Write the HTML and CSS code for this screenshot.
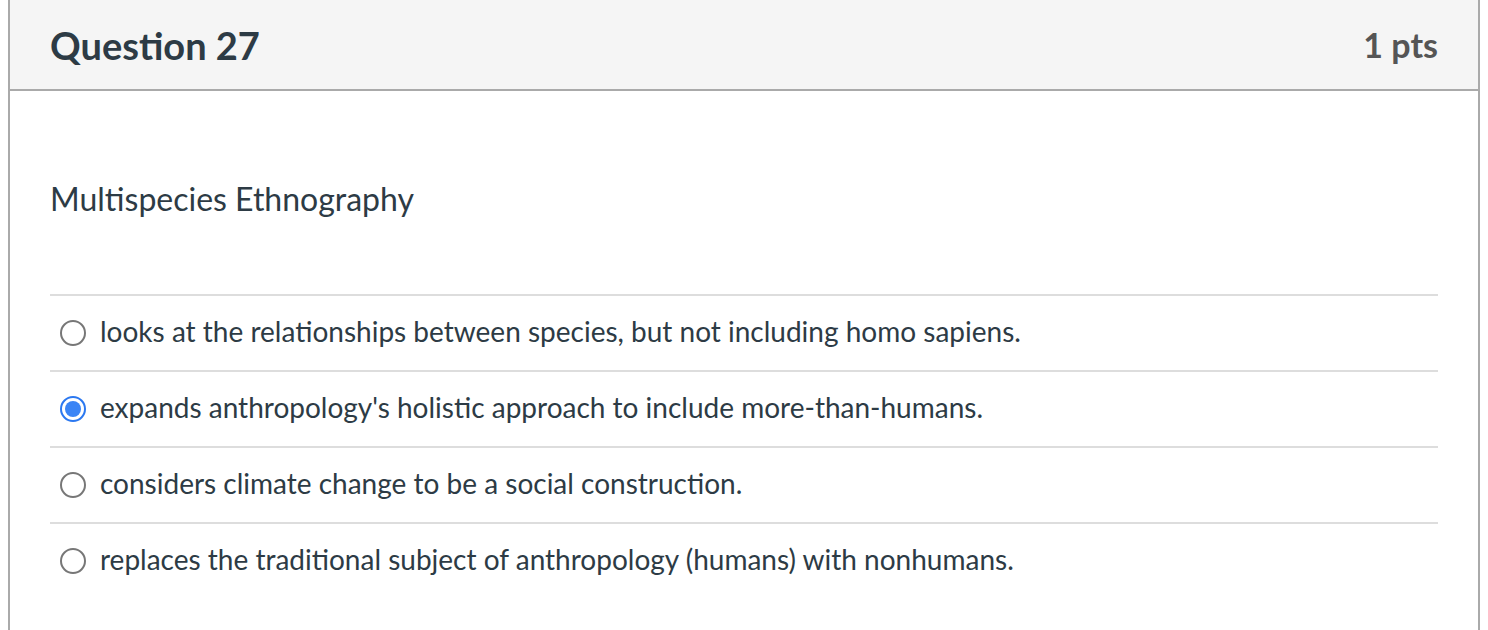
FILE: index.html
```html
<!DOCTYPE html>
<html>
<head>
<meta charset="utf-8">
<link rel="stylesheet" href="styles.css">
</head>
<body>
<div class="question">
  <div class="q-header">
    <h2 class="q-title">Question 27</h2>
    <span class="q-points">1 pts</span>
  </div>
  <div class="q-body">
    <p class="q-text">Multispecies Ethnography</p>
    <div class="answers">
      <label class="answer"><span class="radio"></span><span class="a-text">looks at the relationships between species, but not including homo sapiens.</span></label>
      <label class="answer"><span class="radio checked"></span><span class="a-text">expands anthropology's holistic approach to include more-than-humans.</span></label>
      <label class="answer"><span class="radio"></span><span class="a-text">considers climate change to be a social construction.</span></label>
      <label class="answer"><span class="radio"></span><span class="a-text">replaces the traditional subject of anthropology (humans) with nonhumans.</span></label>
    </div>
  </div>
</div>
</body>
</html>
```
FILE: styles.css
```css
html, body {
  margin: 0;
  padding: 0;
  background: #ffffff;
}
body {
  padding: 0 8px;
  font-family: Lato, "Noto Sans", sans-serif;
  color: #2d3b45;
}
.question {
  border-left: 2px solid #aaaaaa;
  border-right: 2px solid #aaaaaa;
  height: 630px;
  box-sizing: border-box;
}
.q-header {
  height: 89px;
  background: #f5f5f5;
  border-bottom: 2px solid #aaaaaa;
  display: flex;
  align-items: center;
  justify-content: space-between;
  padding: 0 40px;
}
.q-title {
  margin: 0;
  font-size: 38px;
  font-weight: 700;
  color: #2d3b45;
  line-height: 1;
}
.q-points {
  font-size: 34px;
  font-weight: 700;
  color: #555555;
  line-height: 1;
}
.q-body {
  padding: 0 40px;
}
.q-text {
  margin: 0;
  padding-top: 90px;
  height: 36px;
  line-height: 36px;
  font-size: 32px;
  margin-bottom: 77px;
}
.answers {
  display: flex;
  flex-direction: column;
}
.answer {
  display: flex;
  align-items: center;
  gap: 14px;
  height: 74px;
  border-top: 2px solid #dddddd;
  padding-left: 10px;
  font-size: 28px;
}
.radio {
  width: 26px;
  height: 26px;
  box-sizing: border-box;
  border: 2px solid #777777;
  border-radius: 50%;
  flex: none;
  position: relative;
}
.radio.checked {
  border-color: #2b78f0;
}
.radio.checked::after {
  content: "";
  position: absolute;
  left: 3px;
  top: 3px;
  width: 16px;
  height: 16px;
  border-radius: 50%;
  background: #3a84f5;
}
.a-text {
  line-height: 30px;
  padding-bottom: 4px;
}
```
